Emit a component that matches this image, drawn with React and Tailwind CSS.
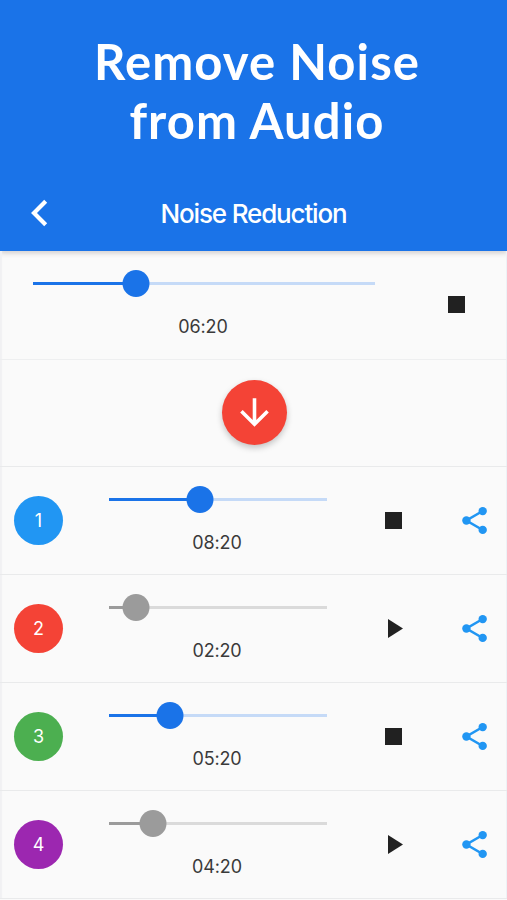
import { MdArrowDownward } from "react-icons/md";

const tracks = [
  { id: 1, time: "08:20", value: 41.7, playing: true, badge: "bg-[#2196f3]" },
  { id: 2, time: "02:20", value: 12.6, playing: false, badge: "bg-[#f44336]" },
  { id: 3, time: "05:20", value: 28.1, playing: true, badge: "bg-[#4caf50]" },
  { id: 4, time: "04:20", value: 20.4, playing: false, badge: "bg-[#9c27b0]" },
];

function Slider({ value, active = true }) {
  return (
    <div className={`relative flex h-[27px] items-center ${active ? "text-[#1a73e8]" : "text-[#9b9b9b]"}`}>
      <div className={`h-[3px] w-full ${active ? "bg-[#c5daf7]" : "bg-[#dadada]"}`}>
        <div className="h-full bg-current" style={{ width: `${value}%` }} />
      </div>
      <div
        className="absolute top-0 size-[27px] -translate-x-1/2 rounded-full bg-current"
        style={{ left: `${value}%` }}
      />
    </div>
  );
}

function Player({ time, value, active }) {
  return (
    <div className="pt-[18.5px]">
      <Slider value={value} active={active} />
      <p className="mt-[18px] pr-[2px] text-center text-[18px] leading-6 tracking-[-0.15px] text-[#3a3a3a]">
        {time}
      </p>
    </div>
  );
}

function StopIcon() {
  return <span className="block size-[17px] bg-[#212121]" />;
}

function PlayIcon() {
  return (
    <svg viewBox="0 0 15 19" className="ml-[3px] h-[19px] w-[15px] fill-[#212121]">
      <path d="M0 0v19l15-9.5z" />
    </svg>
  );
}

function ShareIcon() {
  return (
    <svg viewBox="0 0 33 33" className="size-[33px]" fill="currentColor">
      <path d="M24.7 7 8.4 16.5l16.3 9.5" fill="none" stroke="currentColor" strokeWidth="2.6" />
      <circle cx="24.7" cy="7.1" r="4.2" />
      <circle cx="8.4" cy="16.5" r="4.2" />
      <circle cx="24.7" cy="25.9" r="4.2" />
    </svg>
  );
}

export default function App() {
  return (
    <div className="h-[900px] w-[507px] overflow-hidden bg-[#fafafa] font-[Inter,sans-serif]">
      <header className="h-[251px] bg-[#1a73e8] text-white shadow-[0_2px_5px_rgba(60,40,40,0.22)]">
        <h1 className="pt-8 pl-[7px] text-center font-[Lato,sans-serif] text-[49px] leading-[59px] font-bold tracking-[1.1px]">
          Remove Noise
          <br />
          from Audio
        </h1>
        {/* App bar */}
        <div className="mt-[25px] grid h-[76px] grid-cols-[80px_1fr_80px] items-center">
          <svg viewBox="0 0 18 28" className="ml-[30px] h-7 w-[18px]" fill="none" stroke="currentColor" strokeWidth="4.2">
            <path d="M15.7 2.3 4 14l11.7 11.7" />
          </svg>
          <h2 className="text-center text-[26px] font-medium tracking-[-1.15px]">Noise Reduction</h2>
        </div>
      </header>

      <main className="shadow-[inset_2px_0_1px_#f1f1f3,inset_-1px_0_0_#edf2f6]">
        {/* Source recording */}
        <section className="flex h-[109px] border-b border-[#eeeff0] pl-[33px]">
          <div className="w-[342px]">
            <Player time="06:20" value={30.1} active />
          </div>
          <button className="ml-[73px] self-center pb-px">
            <StopIcon />
          </button>
        </section>

        <section className="flex h-[107px] items-center justify-center border-b border-[#e9eaeb] pb-px pl-px">
          <button className="flex size-[65px] items-center justify-center rounded-full bg-[#f44336] text-white shadow-[0_3px_6px_rgba(0,0,0,0.22)]">
            <MdArrowDownward size={43} />
          </button>
        </section>

        {/* Processed versions */}
        {tracks.map((t) => (
          <section key={t.id} className="flex h-[108px] border-b border-[#e9eaeb] pl-[14px]">
            <span
              className={`flex size-[49px] shrink-0 items-center justify-center self-center rounded-full text-[18px] text-white ${t.badge}`}
            >
              {t.id}
            </span>
            <div className="ml-[46px] w-[218px]">
              <Player time={t.time} value={t.value} active={t.playing} />
            </div>
            <button className="ml-[50px] flex w-[33px] justify-center self-center">
              {t.playing ? <StopIcon /> : <PlayIcon />}
            </button>
            <button className="ml-12 self-center text-[#2196f3]">
              <ShareIcon />
            </button>
          </section>
        ))}
      </main>
    </div>
  );
}
